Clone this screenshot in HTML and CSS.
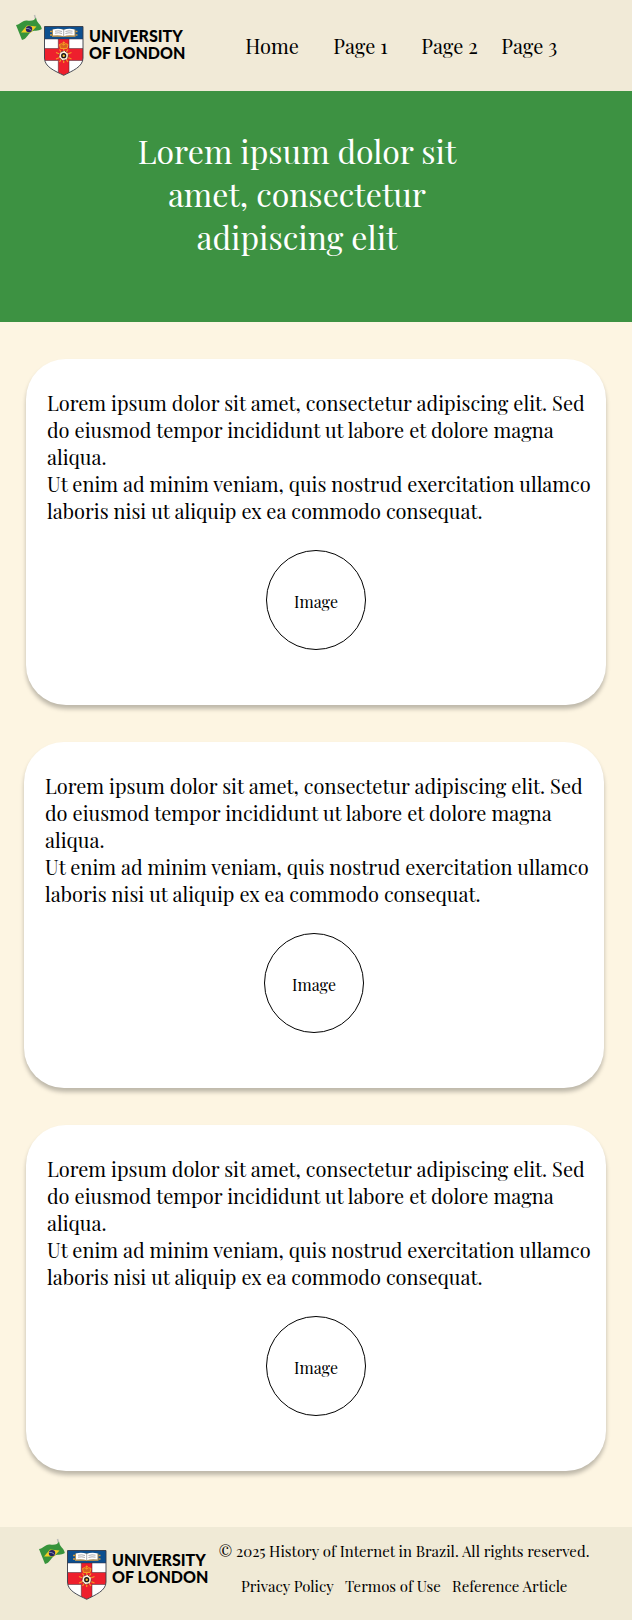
FILE: index.html
```html
<!DOCTYPE html>
<html lang="en">
<head>
<meta charset="utf-8">
<meta name="viewport" content="width=device-width, initial-scale=1">
<title>History of Internet in Brazil</title>
<link rel="stylesheet" href="styles.css">
</head>
<body>
<svg class="sprite" aria-hidden="true">
  <symbol id="crest" viewBox="0 0 68 62">
    <path d="M18.500 1 19.800 6" stroke="#bdbdb8" stroke-width="1.500" fill="none"/>
    <path d="M0 11C4 11 6 6 11 6.500 16 7.500 19 6 20 3.500 20.500 9 25 10 25.800 15 22 18 18 15 14 19 11 22 10 25 6 26Z" fill="#37943b"/>
    <path d="M5 18.500 11 11.500 20.500 12.500 15 18.500Z" fill="#f3cf25"/>
    <circle cx="13" cy="15.100" r="3.200" fill="#242263"/>
    <path d="M10 14.400Q13 13.800 15.500 16.400" stroke="#aeb4cf" stroke-width=".7" fill="none"/>
    <path d="M28.500 12.500H67V44C67 53 56 57 47.700 61.300 39 57 28.500 53 28.500 44Z" fill="#fff"/>
    <path d="M28.500 12.500H67V25H28.500Z" fill="#0c4f8f"/>
    <path d="M42.300 25H53V58.500L47.700 61.300 42.300 58.500Z" fill="#ee1f2d"/>
    <path d="M28.500 34.500H67V44L66.500 46.500H29L28.500 44Z" fill="#ee1f2d"/>
    <path d="M28.500 25H67M28.500 34.500H42.300M53 34.500H67M29 46.500H42.300M53 46.500H66.500M42.300 25V34.500M53 25V34.500M42.300 46.500V58.500M53 46.500V58.500" stroke="#3d2a35" stroke-width=".5" fill="none"/>
    <path d="M28.500 12.500H67V44C67 53 56 57 47.700 61.300 39 57 28.500 53 28.500 44Z" fill="none" stroke="#353a45" stroke-width=".9"/>
    <path d="M34 17.500H36M59.500 17.500H61.500M34 21H36M59.500 21H61.500" stroke="#d29b3d" stroke-width="1.500"/>
    <path d="M36 15.500H59.500V23H36Z" fill="#a98b52"/>
    <path d="M37 15.500Q43 14 47.700 16 52.500 14 58.500 15.500V21.500Q52 20.500 47.700 22.300 43.500 20.500 37 21.500Z" fill="#fff"/>
    <path d="M47.700 16V22.300M39 17.200Q43 16.300 46 17.500M39 19.200Q43 18.300 46 19.500M49.500 17.500Q53 16.300 56.500 17.200M49.500 19.500Q53 18.300 56.500 19.200" stroke="#77777c" stroke-width=".6" fill="none"/>
    <path d="M44.500 34.500 43.500 30.500Q46 28.500 47.700 31 49.500 28.500 52 30.500L51 34.500ZM47.700 27.500V31M46.500 28.700H49" stroke="#f5a623" stroke-width=".9" fill="#d9601f"/>
    <path d="M47.700 35V49M40 38.500 55.500 45M40 45 55.500 38.500M43.500 35.500 52 48M52 35.500 43.500 48" stroke="#f59a23" stroke-width="1.200"/>
    <circle cx="47.700" cy="41.700" r="4.600" fill="#fff2df" stroke="#5b2a22" stroke-width=".8" stroke-dasharray="3 1.500"/>
    <circle cx="47.700" cy="41.700" r="2.600" fill="#17151a"/>
    <circle cx="47.700" cy="41.700" r="1.200" fill="#f2c136"/>
  </symbol>
</svg>

<header class="header">
  <a class="brand" href="#">
    <svg class="brand-mark" aria-hidden="true"><use href="#crest"/></svg>
    <span class="brand-name">UNIVERSITY<br>OF LONDON</span>
  </a>
  <nav class="nav" aria-label="Main">
    <a href="#">Home</a>
    <a href="#">Page 1</a>
    <a href="#">Page 2</a>
    <a href="#">Page 3</a>
  </nav>
</header>

<section class="hero">
  <h1 class="hero-title">Lorem ipsum dolor sit amet, consectetur adipiscing elit</h1>
</section>

<main class="cards">
  <article class="card">
    <p>Lorem ipsum dolor sit amet, consectetur adipiscing elit. Sed do eiusmod tempor incididunt ut labore et dolore magna aliqua.</p>
    <p>Ut enim ad minim veniam, quis nostrud exercitation ullamco laboris nisi ut aliquip ex ea commodo consequat.</p>
    <div class="placeholder">Image</div>
  </article>
  <article class="card card-shifted">
    <p>Lorem ipsum dolor sit amet, consectetur adipiscing elit. Sed do eiusmod tempor incididunt ut labore et dolore magna aliqua.</p>
    <p>Ut enim ad minim veniam, quis nostrud exercitation ullamco laboris nisi ut aliquip ex ea commodo consequat.</p>
    <div class="placeholder">Image</div>
  </article>
  <article class="card">
    <p>Lorem ipsum dolor sit amet, consectetur adipiscing elit. Sed do eiusmod tempor incididunt ut labore et dolore magna aliqua.</p>
    <p>Ut enim ad minim veniam, quis nostrud exercitation ullamco laboris nisi ut aliquip ex ea commodo consequat.</p>
    <div class="placeholder">Image</div>
  </article>
</main>

<footer class="footer">
  <a class="brand" href="#">
    <svg class="brand-mark" aria-hidden="true"><use href="#crest"/></svg>
    <span class="brand-name">UNIVERSITY<br>OF LONDON</span>
  </a>
  <div class="legal">
    <p>© 2025 History of Internet in Brazil. All rights reserved.</p>
    <nav class="legal-links" aria-label="Legal">
      <a href="#">Privacy Policy</a>
      <a href="#">Termos of Use</a>
      <a href="#">Reference Article</a>
    </nav>
  </div>
</footer>
</body>
</html>
```
FILE: styles.css
```css
* {
  box-sizing: border-box;
}

body {
  margin: 0;
  background: #fdf5e2;
  color: #000;
  font-family: "Playfair Display", "Liberation Serif", serif;
  font-size: 20px;
  line-height: 27px;
}

p,
h1 {
  margin: 0;
  font-weight: 400;
}

a {
  color: inherit;
  text-decoration: none;
}

.sprite {
  display: none;
}

.header {
  display: flex;
  align-items: flex-start;
  gap: 60px;
  padding: 14px 16px 15px;
  background: #f1ead7;
}

.brand {
  display: flex;
  flex: none;
  gap: 5px;
}

.brand-mark {
  width: 68px;
  height: 62px;
}

.brand-name {
  padding-top: 13px;
  font-family: Lato, sans-serif;
  font-size: 16px;
  font-weight: 900;
  line-height: 17px;
  white-space: nowrap;
}

.nav {
  display: grid;
  grid-template-columns: 88px 88px 80px auto;
  padding-top: 18px;
  white-space: nowrap;
}

.hero {
  padding: 38px 38px 64px 0;
  background: #3d9242;
  color: #fff;
}

.hero-title {
  max-width: 340px;
  margin: 0 auto;
  font-size: 32px;
  line-height: 43px;
  text-align: center;
}

.cards {
  display: grid;
  gap: 37px;
  padding: 37px 26px 56px;
}

.card {
  padding: 30px 8px 55px 21px;
  border-radius: 40px;
  background: #fff;
  box-shadow: 0 4px 4px rgba(0, 0, 0, 0.25);
}

.card-shifted {
  margin: 0 2px 0 -2px;
}

.placeholder {
  display: grid;
  place-items: center;
  width: 100px;
  height: 100px;
  margin: 26px auto 0 219px;
  padding-top: 3px;
  border: 1px solid #000;
  border-radius: 50%;
  font-size: 16px;
}

.footer {
  display: flex;
  align-items: flex-start;
  gap: 10px;
  padding: 11px 42px 20px 39px;
  background: #f0ead6;
}

.legal {
  display: grid;
  flex: 1;
  gap: 8px;
  font-size: 15px;
  text-align: center;
  white-space: nowrap;
}

.legal-links {
  display: flex;
  justify-content: center;
  gap: 11px;
}
```
